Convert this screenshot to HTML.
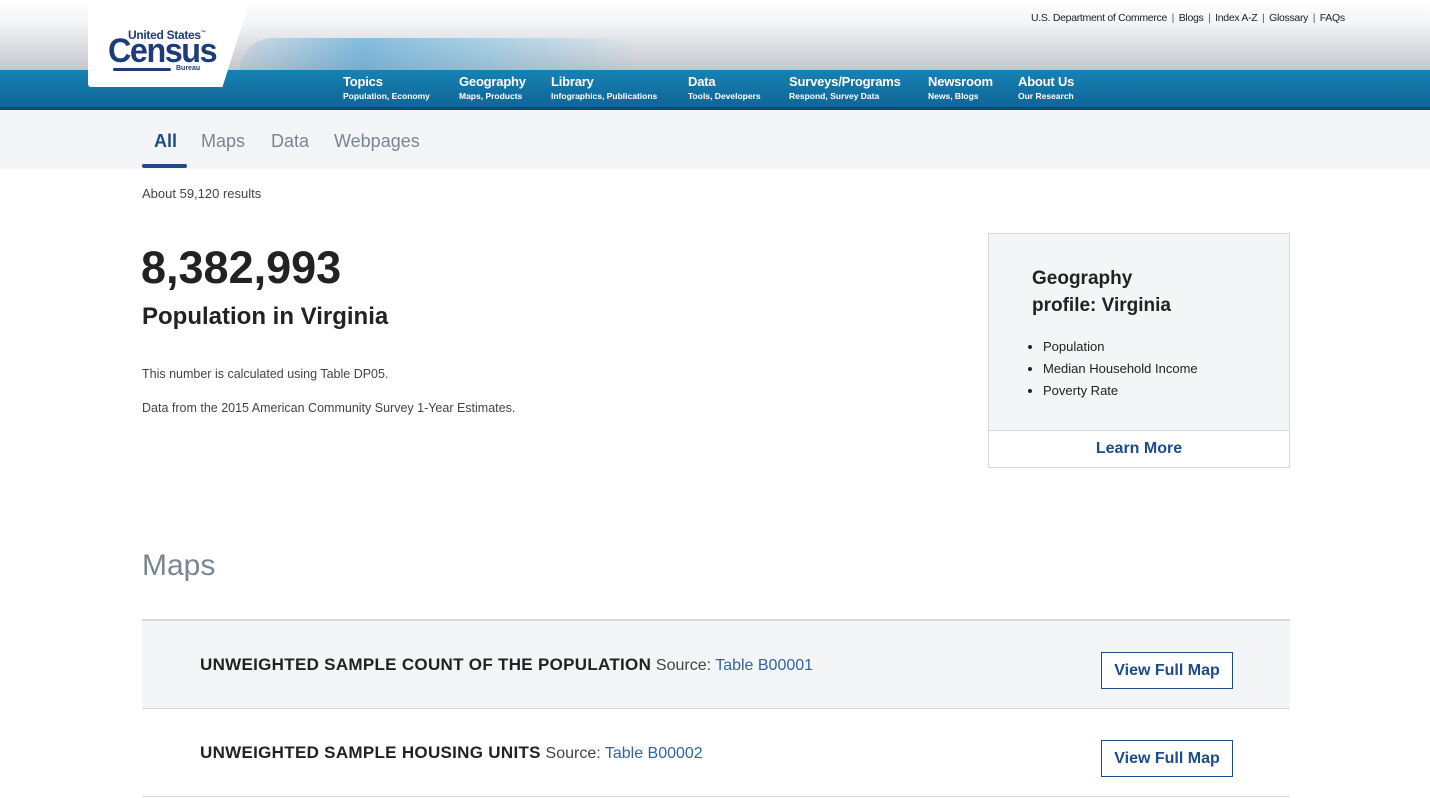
<!DOCTYPE html>
<html><head><style>
*{margin:0;padding:0;box-sizing:border-box}
body{width:1430px;height:798px;overflow:hidden;font-family:"Liberation Sans",sans-serif;background:#fff;color:#222;position:relative}
.hdr{position:absolute;left:0;top:0;width:1430px;height:110px;background:linear-gradient(#fff 0,#f2f3f5 25px,#c3c6cd 70px)}
.band{position:absolute;left:0;top:70px;width:1430px;height:38px;background:linear-gradient(#1781b3,#0f6596)}
.bline{position:absolute;left:0;top:107px;width:1430px;height:3px;background:#0b4c73}
.deco{position:absolute;left:240px;top:38px;width:400px;height:32px;background:linear-gradient(90deg,rgba(50,140,200,.1),rgba(40,150,210,.5) 30%,rgba(60,170,220,.35) 60%,rgba(255,255,255,0));border-radius:200px 200px 0 0}
.logo{position:absolute;left:88px;top:0;width:162px;height:87px;background:#fff;clip-path:polygon(0 0,100% 0,83% 100%,0 100%);border-radius:0 0 0 3px}
.logo .us{position:absolute;left:40px;top:28px;font-size:12px;font-weight:bold;color:#1d3c78;letter-spacing:-.3px}
.logo .c{position:absolute;left:20px;top:32px;font-size:34px;font-weight:bold;color:#1d3c78;letter-spacing:-1.5px;transform:scaleX(.95);transform-origin:left}
.logo .bar{position:absolute;left:25px;top:68px;width:58px;height:3px;background:#1d3c78;border-radius:2px}
.logo .b{position:absolute;left:88px;top:65px;font-size:7px;font-weight:bold;color:#1d3c78}
.nav{position:absolute;top:74px;color:#fff;font-weight:bold}
.nav b{display:block;font-size:13px;letter-spacing:-.2px}
.nav i{display:block;font-style:normal;font-size:8.5px;margin-top:2px}
.top{position:absolute;left:1031px;top:12px;font-size:10.5px;color:#222;letter-spacing:-.3px}
.top span{color:#555;margin:0 2px}
.tabs{position:absolute;left:0;top:110px;width:1430px;height:59px;background:#f4f5f7}
.tab{position:absolute;top:131px;font-size:18px;color:#7a8593}
.ul{position:absolute;left:142px;top:164px;width:45px;height:4px;background:#1e4b8a;border-radius:2px}
.t{position:absolute}
.card{position:absolute;left:988px;top:233px;width:302px;height:235px;border:1px solid #d6d8db;background:#f4f5f7}
.card .lm{position:absolute;left:0;bottom:0;width:100%;height:37px;background:#fff;border-top:1px solid #d6d8db;text-align:center;line-height:36px;color:#1e4b8a;font-weight:bold;font-size:16px}
.card ul{position:absolute;left:54px;top:102px;font-size:13px;color:#222;line-height:22px}
.row{position:absolute;left:142px;width:1148px;height:88px;border-bottom:1px solid #d6d8db}
.row .tt{position:absolute;left:58px;top:34px;font-size:17px;color:#222}
.row .tt b{letter-spacing:.3px}
.row .tt span{font-size:16px;color:#444}
.row .tt a{color:#2f64a8;text-decoration:none}
.btn{position:absolute;left:959px;top:31px;width:132px;height:37px;border:1px solid #1e4b8a;color:#1e4b8a;font-weight:bold;font-size:16px;text-align:center;line-height:35px;background:#fff}
</style></head><body>
<div class="hdr"></div>
<div class="deco"></div>
<div class="band"></div>
<div class="bline"></div>
<div class="logo"><div class="us">United States<sup style="font-size:5px">™</sup></div><div class="c">Census</div><div class="bar"></div><div class="b">Bureau</div></div>
<div class="top">U.S. Department of Commerce <span>|</span> Blogs <span>|</span> Index A-Z <span>|</span> Glossary <span>|</span> FAQs</div>
<div class="nav" style="left:343px"><b>Topics</b><i>Population, Economy</i></div>
<div class="nav" style="left:459px"><b>Geography</b><i>Maps, Products</i></div>
<div class="nav" style="left:551px"><b>Library</b><i>Infographics, Publications</i></div>
<div class="nav" style="left:688px"><b>Data</b><i>Tools, Developers</i></div>
<div class="nav" style="left:789px"><b>Surveys/Programs</b><i>Respond, Survey Data</i></div>
<div class="nav" style="left:928px"><b>Newsroom</b><i>News, Blogs</i></div>
<div class="nav" style="left:1018px"><b>About Us</b><i>Our Research</i></div>
<div class="tabs"></div>
<div class="tab" style="left:154px;color:#1e4b8a;font-weight:bold">All</div>
<div class="tab" style="left:201px">Maps</div>
<div class="tab" style="left:271px">Data</div>
<div class="tab" style="left:334px">Webpages</div>
<div class="ul"></div>
<div class="t" style="left:142px;top:186px;font-size:13px;color:#444">About 59,120 results</div>
<div class="t" style="left:141px;top:242px;font-size:45px;font-weight:bold;color:#222">8,382,993</div>
<div class="t" style="left:142px;top:303px;font-size:24px;font-weight:bold;color:#222">Population in Virginia</div>
<div class="t" style="left:142px;top:367px;font-size:12.5px;color:#444">This number is calculated using Table DP05.</div>
<div class="t" style="left:142px;top:401px;font-size:12.5px;color:#444">Data from the 2015 American Community Survey 1-Year Estimates.</div>
<div class="card">
<div style="position:absolute;left:43px;top:31px;font-size:19px;font-weight:bold;line-height:27px;color:#222">Geography<br>profile: Virginia</div>
<ul><li>Population</li><li>Median Household Income</li><li>Poverty Rate</li></ul>
<div class="lm">Learn More</div>
</div>
<div class="t" style="left:142px;top:549px;font-size:30px;color:#7a8593">Maps</div>
<div style="position:absolute;left:142px;top:619px;width:1148px;height:2px;background:#d6d8db"></div>
<div class="row" style="top:621px;background:#f4f5f7"><div class="tt"><b>UNWEIGHTED SAMPLE COUNT OF THE POPULATION</b> <span>Source: <a>Table B00001</a></span></div><div class="btn">View Full Map</div></div>
<div class="row" style="top:709px"><div class="tt"><b>UNWEIGHTED SAMPLE HOUSING UNITS</b> <span>Source: <a>Table B00002</a></span></div><div class="btn">View Full Map</div></div>
</body></html>
